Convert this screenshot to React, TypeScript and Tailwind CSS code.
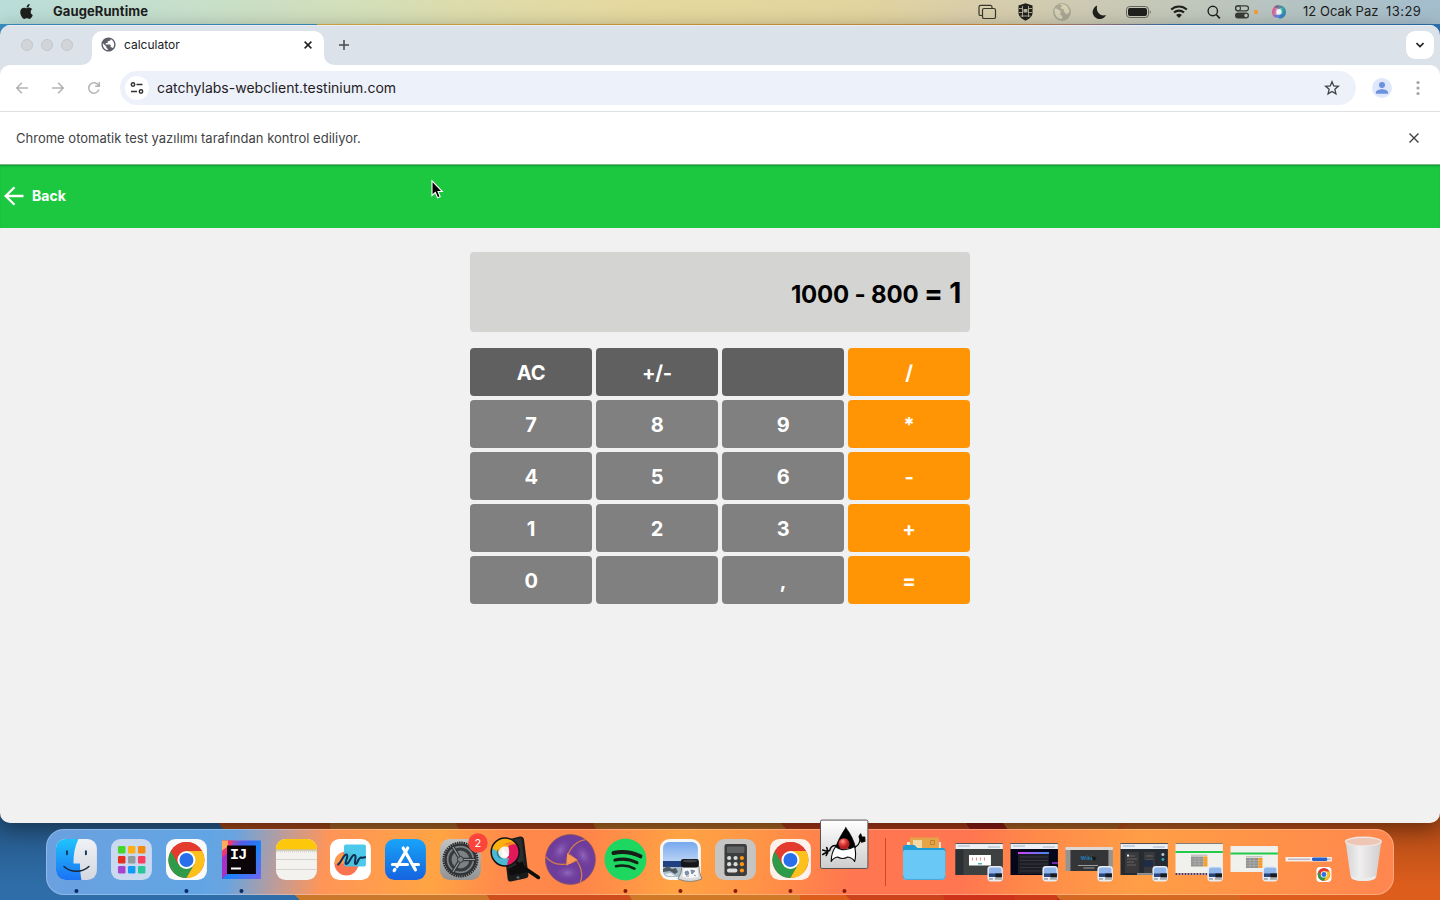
import type { ReactNode } from "react";
import { FaApple } from "react-icons/fa";
import { MdPublic } from "react-icons/md";

const keys: { label: string; tone: "dark" | "mid" | "op" }[] = [
  { label: "AC", tone: "dark" },
  { label: "+/-", tone: "dark" },
  { label: "", tone: "dark" },
  { label: "/", tone: "op" },
  { label: "7", tone: "mid" },
  { label: "8", tone: "mid" },
  { label: "9", tone: "mid" },
  { label: "*", tone: "op" },
  { label: "4", tone: "mid" },
  { label: "5", tone: "mid" },
  { label: "6", tone: "mid" },
  { label: "-", tone: "op" },
  { label: "1", tone: "mid" },
  { label: "2", tone: "mid" },
  { label: "3", tone: "mid" },
  { label: "+", tone: "op" },
  { label: "0", tone: "mid" },
  { label: "", tone: "mid" },
  { label: ",", tone: "mid" },
  { label: "=", tone: "op" },
];

const tones = {
  dark: "bg-[#606060]",
  mid: "bg-[#808080]",
  op: "bg-[#ff9505]",
};

function MenuBar() {
  return (
    <header className="flex h-6 shrink-0 items-center bg-[linear-gradient(90deg,#b9ddd8_0%,#c7dfcb_13%,#d3dfb9_25%,#dfdba9_34%,#e5d89e_45%,#e2d49e_60%,#d8cdab_68%,#c5c8b8_80%,#b4c3c3_90%,#a3bdcd_100%)] text-[13px] text-[#1d201d]">
      <FaApple className="ml-[19px] h-[17px] w-[15px] -translate-y-px" />
      <span className="ml-[19px] w-[96px] text-[13px] font-bold tracking-[0.09px] whitespace-nowrap">GaugeRuntime</span>
      <div className="flex-1" />
      <svg width="325" height="24" viewBox="970 0 325 24" fill="none">
        <g stroke="#39382e" strokeWidth="1.2">
          <path d="M982 15.500h-1.400a1.600 1.600 0 0 1-1.600-1.600V7a1.600 1.600 0 0 1 1.600-1.600h9.800a1.600 1.600 0 0 1 1.600 1.600v1" />
          <rect x="982.500" y="8.500" width="13" height="10" rx="1.600" />
        </g>
        <path d="M1025.500 3.300 1032.500 5.500v7.500c0 3.600-3.500 6-7 7.700-3.500-1.700-7-4.100-7-7.700V5.500z" fill="#20211c" />
        <path d="M1019 8.500h4M1028 8.500h4M1019 12.500h4M1028 12.500h4M1020.500 16h10M1022.500 6v11M1028.500 6v11" stroke="#b5b298" strokeWidth=".9" />
        <path d="M1023.500 9h4v3.500h-4z" fill="#b5b298" />
        <circle cx="1062" cy="12" r="9" fill="#a8a895" />
        <path d="M1054.500 9c2.500-1.500 3 1 5.500 1.500 1.500 1 .8 2.500-.4 4 1.800.5 3.600 1.800 2.400 4.500-4 .5-8-3.500-7.500-10zM1060 4.200c3-.7 6.500.5 8 3.300l1.500 4c-1 1.500-2 3-3.500 2.500-.8-2-3-2-2-4.500-1-.8-3 0-3.500-2 .8-.8 2-1 1.500-1.800z" fill="#d6d1b5" />
        <path d="M1097.200 5.500a7 7 0 1 0 8.800 9.500c-5.500 2-10.500-3.500-8.800-9.500z" fill="#20211c" />
        <rect x="1126.500" y="6.500" width="22" height="11" rx="3.200" stroke="#63645b" />
        <rect x="1128" y="8" width="19" height="8" rx="1.900" fill="#20211c" />
        <path d="M1149.800 10.200c1.300.3 1.300 3.300 0 3.600z" fill="#63645b" />
        <g stroke="#20211c" strokeWidth="2.100">
          <path d="M1171.200 9.600a11.300 11.300 0 0 1 15.600 0M1174 12.600a7.300 7.300 0 0 1 10 0" />
        </g>
        <path d="m1179 18-2.900-2.900a4.100 4.100 0 0 1 5.800 0z" fill="#20211c" />
        <circle cx="1212.800" cy="11" r="4.700" stroke="#20211c" strokeWidth="1.400" />
        <path d="m1216.200 14.500 3.600 3.800" stroke="#20211c" strokeWidth="1.700" />
        <rect x="1235.500" y="5.800" width="13" height="5" rx="2.500" stroke="#3a3c37" strokeWidth="1.200" />
        <circle cx="1238" cy="8.300" r="2.500" stroke="#3a3c37" strokeWidth="1.100" />
        <rect x="1235" y="12.500" width="14" height="6" rx="3" fill="#3a3c37" />
        <circle cx="1246" cy="15.500" r="1.700" fill="#c0c5bb" />
        <circle cx="1256" cy="12" r="2.200" fill="#f79a32" />
        <defs>
          <linearGradient id="siri" x1="0" y1="0" x2="1" y2=".2">
            <stop offset="0" stopColor="#d8437c" />
            <stop offset=".3" stopColor="#d873a8" />
            <stop offset=".55" stopColor="#c8e6ec" />
            <stop offset=".75" stopColor="#34b5a5" />
            <stop offset="1" stopColor="#3682ad" />
          </linearGradient>
        </defs>
        <circle cx="1279" cy="12" r="7" fill="url(#siri)" />
        <path d="M1274 7q4-4 9 0l-4 2z" fill="#475b78" opacity=".7" />
        <path d="M1273.500 15.500c3 4 8 3.500 10.500-.5-3-1.500-6-.5-10.500.5z" fill="#4a63dc" opacity=".7" />
        <circle cx="1279" cy="12" r="2.700" fill="#fff" opacity=".85" />
      </svg>
      <span className="ml-2 w-[76px] text-[13px] tracking-[0.02px] whitespace-nowrap">12 Ocak Paz</span>
      <span className="mr-[18px] ml-[7px] w-[36px] text-[13px] tracking-[0.45px] whitespace-nowrap">13:29</span>
    </header>
  );
}

function TabStrip() {
  return (
    <div className="flex h-10 items-end border-t border-[#eaeef2] bg-[#dce2ea]">
      <div className="flex h-full w-[92px] gap-2 pt-[13px] pl-[21px]">
        <i className="size-3 rounded-full border border-[#c3c7ca] bg-[#d1d4d8]" />
        <i className="size-3 rounded-full border border-[#c3c7ca] bg-[#d1d4d8]" />
        <i className="size-3 rounded-full border border-[#c3c7ca] bg-[#d1d4d8]" />
      </div>
      <div className="relative flex h-[34px] w-[232px] items-center rounded-t-[10px] bg-white pb-1.5">
        <span className="absolute bottom-0 -left-2.5 size-2.5 bg-white">
          <span className="block size-full rounded-br-[10px] bg-[#dce2ea]" />
        </span>
        <span className="absolute -right-2.5 bottom-0 size-2.5 bg-white">
          <span className="block size-full rounded-bl-[10px] bg-[#dce2ea]" />
        </span>
        <MdPublic className="mb-px ml-[7.500px] size-[17px] text-[#5d6167]" />
        <span className="ml-[7.500px] flex-1 text-[12px] text-[#202124]">calculator</span>
        <svg className="mr-3" width="8" height="8" viewBox="0 0 8 8" stroke="#1f2021" strokeWidth="1.500">
          <path d="m.6.6 6.800 6.800M7.400.6.6 7.400" />
        </svg>
      </div>
      <svg className="mb-[15px] ml-[15px]" width="10" height="10" viewBox="0 0 10 10" stroke="#45484c" strokeWidth="1.500">
        <path d="M5 0v10M0 5h10" />
      </svg>
      <div className="flex-1" />
      <div className="mr-1.5 mb-1.5 flex size-7 items-center justify-center rounded-[9px] bg-white">
        <svg width="8" height="6" viewBox="0 0 8 6" fill="none" stroke="#202124" strokeWidth="1.600">
          <path d="m.5 1 3.500 3.500L7.500 1" />
        </svg>
      </div>
    </div>
  );
}

function Toolbar() {
  return (
    <div className="bg-[#dce2ea]">
      <div className="flex h-[47px] items-center rounded-t-[10px] border-b border-[#dfe0e2] bg-white">
        <svg className="ml-3.5" width="88" height="18" viewBox="14 79 88 18" fill="none" stroke="#b3b4b6" strokeWidth="1.500">
          <path d="M28 88H17M22 82.700 16.700 88l5.300 5.300M52 88h11M58 82.700l5.300 5.300-5.300 5.300" />
          <path d="M98.600 85.600a5.200 5.200 0 1 0 .3 4M99.300 82v4.200h-4.200" />
        </svg>
        <div className="ml-[18px] flex h-[34px] w-[1236px] items-center rounded-full bg-[#ecf1fa]">
          <span className="ml-[5px] flex size-6 items-center justify-center rounded-full bg-white">
            <svg width="14" height="12" viewBox="0 0 14 12" fill="none" stroke="#303236" strokeWidth="1.500">
              <circle cx="3" cy="2.500" r="1.700" />
              <path d="M6.500 2.500h6M1 9.500h6" />
              <circle cx="11" cy="9.500" r="1.700" />
            </svg>
          </span>
          <span className="mb-0.5 ml-2 flex-1 text-[14px] tracking-[0.01px] text-[#1f2023]">catchylabs-webclient.testinium.com</span>
          <svg className="mr-4" width="16" height="16" viewBox="0 0 16 16" fill="none" stroke="#3f4246" strokeWidth="1.300">
            <path d="m8 1.700 1.750 4.250 4.600.35-3.500 3 1.080 4.500L8 11.400l-3.930 2.400 1.080-4.500-3.500-3 4.600-.35z" />
          </svg>
        </div>
        <svg className="ml-4" width="20" height="20" viewBox="0 0 20 20">
          <circle cx="10" cy="10" r="10" fill="#dfe8fa" />
          <circle cx="10" cy="7" r="3" fill="#6b92df" />
          <path d="M4 15.800v-1.600C4 12.200 7.500 11.200 10 11.200s6 1 6 3v1.600z" fill="#6b92df" />
        </svg>
        <svg className="ml-6" width="4" height="16" viewBox="0 0 4 16" fill="#a3a4a6">
          <circle cx="2" cy="2.500" r="1.600" />
          <circle cx="2" cy="8" r="1.600" />
          <circle cx="2" cy="13.500" r="1.600" />
        </svg>
      </div>
    </div>
  );
}

function Calculator() {
  return (
    <main className="flex flex-1 flex-col bg-[#f1f1f1]">
      <div className="flex h-16 items-center border-t border-[#78b885] bg-[#1bc83f] pb-px shadow-[inset_0_2px_2px_-1px_#14993a]">
        <svg className="ml-1" width="20" height="20" viewBox="0 0 20 20" fill="none" stroke="#fff" strokeWidth="2.300">
          <path d="M19.500 10H2M10.500 1.200 1.700 10l8.800 8.800" />
        </svg>
        <span className="mb-px ml-2 text-[14px] font-bold text-white">Back</span>
      </div>
      <div className="mx-auto mt-6 flex h-20 w-[500px] items-baseline justify-end rounded bg-[#d4d4d2] pt-[23px] pr-[9px] font-bold text-black">
        <span className="text-[24px] leading-9 tracking-[-0.2px] whitespace-pre">1000 - 800 </span>
        <span className="text-[28px] leading-9 tracking-[-0.2px]">= 1</span>
      </div>
      <div className="mx-auto mt-4 grid w-[500px] grid-cols-4 gap-1">
        {keys.map((k, i) => (
          <button key={i} className={`flex h-12 items-center justify-center rounded pt-0.5 text-[20px] font-bold tracking-[-0.3px] text-white ${tones[k.tone]}`}>
            {k.label}
          </button>
        ))}
      </div>
    </main>
  );
}

function Chrome({ x = 27.5, y = 31, r = 18 }: { x?: number; y?: number; r?: number }) {
  return (
    <g transform={`translate(${x} ${y}) scale(${r / 18})`}>
      <circle r="18" fill="#e33b2e" />
      <path d="M-15.600-9A18 18 0 0 0 0 18L7.800 4.500 0 0-7.800 4.500z" fill="#2d9b48" />
      <path d="M15.600-9A18 18 0 0 1 0 18L7.800 4.500 0-9z" fill="#fcc21b" />
      <path d="M-15.600-9A18 18 0 0 1 15.600-9H0L-7.800 4.500z" fill="#e33b2e" />
      <circle r="9" fill="#fff" />
      <circle r="7" fill="#2a6fea" />
    </g>
  );
}

function Tile({ fill }: { fill: string }) {
  return <rect x="7" y="10" width="41" height="41" rx="9.500" fill={fill} />;
}

function Finder() {
  return (
    <>
      <Tile fill="url(#finderRight)" />
      <path d="M29.500 10H16.500A9.500 9.500 0 0 0 7 19.500v22A9.500 9.500 0 0 0 16.500 51H32.500c-.9-5-1.400-10-1.500-16.500h-6.500C24.500 25 26 17 29.500 10z" fill="url(#finderLeft)" />
      <path d="M18 22.200v3M37 22.200v3" stroke="#173a5d" strokeWidth="2" strokeLinecap="round" />
      <path d="M15 37.500c7 6.500 18 6.500 25 0" stroke="#182838" strokeWidth="1.500" fill="none" strokeLinecap="round" />
    </>
  );
}

function Launchpad() {
  const colors = ["#44d62c", "#fbb016", "#f58a12", "#e5301f", "#929b9d", "#fb3d60", "#a843d0", "#139cf5", "#28c69a"];
  return (
    <>
      <Tile fill="#c9daf0" />
      {colors.map((c, i) => (
        <rect key={i} x={14 + (i % 3) * 10} y={17 + Math.floor(i / 3) * 10} width="7.500" height="7.500" rx="1.300" fill={c} />
      ))}
    </>
  );
}

function IntelliJ() {
  return (
    <>
      <path d="M8 11.500h39v38.500H8z" fill="url(#ij)" />
      <path d="M8 24l5-7v28l-5 5z" fill="#a431c9" />
      <path d="m8 11.500 12 0-7 13-5 4z" fill="#f9376b" opacity=".85" />
      <path d="m8 11.500 6 0 0 6-6 4z" fill="#fdac5c" />
      <path d="M13 16.500h29v28.500H13z" fill="#0a0308" />
      <text x="16" y="29.500" fontFamily="Liberation Mono" fontWeight="700" fontSize="15" letterSpacing="-.8" fill="#fff">IJ</text>
      <path d="M17 38.500h10V40.500h-10z" fill="#fff" />
    </>
  );
}

function Notes() {
  return (
    <>
      <Tile fill="#f3f2ee" />
      <path d="M7 20.500v-1a9.500 9.500 0 0 1 9.500-9.500h22a9.500 9.500 0 0 1 9.500 9.500v1z" fill="#fdc80b" />
      <path d="M7 21h41" stroke="#b8a97c" />
      <path d="M7 22.700h41" stroke="#bbb" strokeDasharray="1 1" strokeWidth=".8" />
      <path d="M7 30.500h41M7 40.500h41" stroke="#d4d3d0" />
    </>
  );
}

function Freeform() {
  return (
    <>
      <Tile fill="#fff" />
      <circle cx="23.500" cy="34.500" r="12" fill="#fb7350" />
      <path d="M11.500 35a12 12 0 0 1 8-11.800l4 11.300z" fill="#fd9a4d" />
      <rect x="21" y="15.500" width="22" height="22" rx="2" fill="#3ec5e8" opacity=".93" />
      <path d="M14.500 36c4-2 6-11 9-10.500s-3 10 0 9.500 5-9.500 8-9 -1 8 1 9 2.500-7 6-6.500c1.500.5 2-.2 4.500-.5" stroke="#0d3154" strokeWidth="2" fill="none" />
    </>
  );
}

function AppStore() {
  return (
    <>
      <Tile fill="url(#store)" />
      <g stroke="#fff" strokeWidth="3.200" strokeLinecap="round">
        <path d="M29.800 19 19 37.500M25.200 19l12.300 21.800M14.500 35.500h15M35.500 35.500h5M17 40.500l-.8 1.200" />
      </g>
    </>
  );
}

function Settings() {
  return (
    <>
      <Tile fill="url(#silver)" />
      <circle cx="27.500" cy="30.500" r="17" fill="none" stroke="#252729" strokeWidth="2" strokeDasharray="1.500 .8" />
      <circle cx="27.500" cy="30.500" r="15" fill="#7d8285" stroke="#303335" strokeWidth="2.500" />
      <circle cx="27.500" cy="30.500" r="10.500" fill="none" stroke="#373b3e" strokeWidth="3" />
      <path d="M27.500 30.500H42M27.500 30.500 20 18M27.500 30.500 20 43" stroke="#34383a" strokeWidth="3.500" />
      <path d="M27.500 30.500H42M27.500 30.500 20 18M27.500 30.500 20 43" stroke="#979b9e" strokeWidth="1.200" />
      <circle cx="27.500" cy="30.500" r="3" fill="#7d8285" stroke="#34383a" />
      <circle cx="45" cy="14" r="9.800" fill="#fb453b" />
      <text x="45" y="18" textAnchor="middle" fontSize="11" fill="#fff">2</text>
    </>
  );
}

function Magnifier() {
  return (
    <>
      <path d="m18 11 14-3.500q3.500-.5 4 2.500l4.500 36q.3 2.800-2.500 3.300l-15 3.200q-2.800.5-3.300-2.300L15.500 14q-.3-2.300 2.500-3z" fill="#1a1b1c" />
      <path d="m19 12 14.500-3 4 34.500-16.500 3.500z" fill="#2c2d2e" />
      <path d="m20 40 15-8 3 11.500-16.500 3.500z" fill="#0e0e0f" />
      <circle cx="30" cy="48.500" r="1.500" fill="#5a5e60" />
      <g transform="translate(17.200 23)">
        <circle r="14" fill="#f4efe9" />
        <path d="M-13.500-3A14 14 0 0 1 12-7Q8-8 3-5Q-6-8-8 4Q-10-3-13.500-3z" fill="#fbb010" />
        <path d="M-2-7Q5-13 12-7Q10-6 9-3Q4-8-2-7z" fill="#f3812a" />
        <path d="M3-6Q9-9 12-7A14 14 0 0 1 2 13.800Q-3 11-4 8Q7 7 3-6z" fill="#e3185b" />
        <path d="M-13.500-3Q-9-4-8 3Q-4 8 4 6Q2 10 2 13.800A14 14 0 0 1-13.500-3z" fill="#4bb9d3" />
        <path d="M-7-3Q-8 4-2 7L-6 6Q-11 1-7-3z" fill="#23829f" />
        <path d="m-3-4 7 8-7 1z" fill="#fff" />
        <circle r="14" fill="none" stroke="#131212" strokeWidth="1.500" />
      </g>
      <path d="m28 33 6 4" stroke="#0d0d0d" strokeWidth="2.500" />
      <path d="m35 38 15.500 10.500" stroke="#0d0d0d" strokeWidth="3.600" strokeLinecap="round" />
    </>
  );
}

function Aperture() {
  return (
    <g transform="translate(27.500 30.500)">
      <circle r="25" fill="#6e3c9b" stroke="#8b5560" strokeWidth=".8" />
      {[0, 120, 240].map((a) => (
        <ellipse key={a} transform={`rotate(${a}) translate(13 -4) rotate(62)`} rx="14" ry="9" fill="url(#purple)" />
      ))}
      {[0, 120, 240].map((a) => (
        <path key={a} transform={`rotate(${a})`} d="M-3.500 6C-5-5 2-18 15-20" fill="none" stroke="#d48146" strokeWidth="1.200" />
      ))}
      <path d="M-3.300-5.800 6.700.1-3.400 5.700z" fill="#fb9853" />
    </g>
  );
}

function Spotify() {
  return (
    <>
      <circle cx="27.500" cy="30.500" r="21" fill="#1ed760" />
      <g fill="none" stroke="#151f18" strokeLinecap="round">
        <path d="M15.500 24c9-2 18-1 27 3.300" strokeWidth="4" />
        <path d="M17 31c8-2 15-1 22 2.700" strokeWidth="3.200" />
        <path d="M18 37.300c7-1.600 13-.7 18.500 2.400" strokeWidth="2.600" />
      </g>
    </>
  );
}

function Preview() {
  return (
    <>
      <Tile fill="#f7f7f5" />
      <rect x="10" y="13" width="35" height="35" rx="6" fill="url(#sky)" />
      <path d="M10 32h35v6H10z" fill="#20407f" />
      <path d="M10 38h35v4a6 6 0 0 1-6 6H16a6 6 0 0 1-6-6z" fill="#a9bcc8" />
      <path d="m10 40 5-3 4 3 4-1 2 4-3 2-5-3-7 1z" fill="#4f5960" />
      <path d="m12 45 6-1 4 3h-7z" fill="#e9eff1" />
      <path d="M29 37q0 7-4 13 12 5 24 0-3-6-3-13z" fill="#d9dbdc" stroke="#707477" strokeWidth=".8" />
      <path d="M30.500 39h14l1 9q-8 2-16 0z" fill="#f4f6f7" />
      <path d="m32 43 3-1 1 3-3 1zM38 41l4 1-3 3zM33 47h3M41 46l2 1" fill="#7f93ab" stroke="#6e7c90" strokeWidth=".8" />
      <rect x="28" y="30" width="18" height="8.500" rx="2.500" fill="#151617" />
      <ellipse cx="37" cy="32" rx="7.500" ry="1.400" fill="#3c3e40" />
    </>
  );
}

function CalcIcon() {
  return (
    <>
      <Tile fill="#c6c5c3" />
      <rect x="16.500" y="15" width="22.500" height="32" rx="2.500" fill="#3b3c3e" />
      <rect x="19" y="17.500" width="17.500" height="6.500" rx="1" fill="#616264" />
      {[0, 1, 2, 3, 4, 5].map((i) => (
        <circle key={i} cx={21.2 + (i % 3) * 6.4} cy={29 + Math.floor(i / 3) * 6.2} r="2.100" fill={i % 3 === 2 ? "#ff9514" : "#d9dadb"} />
      ))}
      <rect x="19" y="39.500" width="10.500" height="4" rx="2" fill="#dddddd" />
      <circle cx="34" cy="41.500" r="2.100" fill="#ff9514" />
    </>
  );
}

function Duke() {
  return (
    <>
      <rect x="3.500" y="-9" width="47.500" height="48.500" rx="1.500" fill="url(#paper)" stroke="#575150" />
      <g transform="translate(.7 0)" stroke="#080808" strokeLinejoin="round" strokeLinecap="round">
        <path d="M18 16.500q-5 0-6 5l-3 1" fill="none" strokeWidth="1.500" />
        <path d="M10 22.500 5 21M9.500 23l-4.500 2.500M10 23.500l-1.500 3M10 21.500 9 18.500" fill="none" strokeWidth="1.600" />
        <path d="M37 18q4-1 5.500-7" fill="none" strokeWidth="1.300" />
        <path d="m42.500 11-1-3.500 1.500-2.500 1 3 3 0 .3 4-3.300 1z" strokeWidth="1.300" />
        <path d="M28.200-1.500Q36 9 38 19H17.500Q21 9 28.200-1.500z" strokeWidth=".6" />
        <path d="M18 17.500Q13.500 24 13.500 32.500 16 28.500 20 28 25 31 30 28 34.500 28.500 37 32.500 39 25 37 17.500 26 24 18 17.500z" fill="#fff" strokeWidth="1.100" />
      </g>
      <circle cx="27" cy="14.700" r="5.600" fill="url(#red)" />
    </>
  );
}

function Folder() {
  return (
    <>
      <path d="M10 13h34v10H10z" fill="#f3e4d3" />
      <path d="M13 8.500h29V23H13z" fill="#e3a44a" />
      <path d="M16 11h9v8h-9z" fill="#f2d9a8" />
      <path d="M33.500 11.500h4v4h-4z" fill="none" stroke="#c38125" />
      <path d="M6 18.500q0-2.500 2.500-2.500h9l3 3h25.500q2.500 0 2.500 3v20H6z" fill="#1d9bd3" />
      <path d="M6 23q0-2 2-2h38.500q2 0 2 2v24.500q0 3.500-3.500 3.500H9.500Q6 51 6 47.500z" fill="#69c8f5" />
      <path d="M6 46.500q0 4 3.500 4H45q3.500 0 3.500-4" stroke="#4ca8d8" fill="none" />
    </>
  );
}

function MiniPreview() {
  return (
    <g>
      <rect x="35.500" y="37" width="15.500" height="15.500" rx="3.500" fill="#e8edf4" />
      <path d="M37 41q0-2.500 2.500-2.500h8q2 0 2 2V45H37z" fill="#90b6ec" />
      <path d="M37 44.500h13V48H37z" fill="#28467c" />
      <path d="M43.500 44.500h6.500v4h-6.500z" fill="#191b1f" />
      <path d="M37 50h4M43 50h7" stroke="#777" />
    </g>
  );
}

function Thumb({ kind }: { kind: "modal" | "list" | "wiki" | "code" | "calc" | "calcPlain" }) {
  if (kind === "wiki")
    return (
      <>
        <path d="M3.500 18h47.500v24H3.500z" fill="#969493" />
        <path d="M3.500 18h47.500v3H3.500z" fill="#ded8d4" />
        <path d="M8.500 21h38v21h-38z" fill="#343536" />
        <text x="18.500" y="31" fontSize="5.500" fontWeight="700" fill="#217bb5">Wiki</text>
        <path d="m30 27 5 2-3 3z" fill="#14181c" />
        <path d="M16 36.500h20M21.500 39h11" stroke="#b9b9b9" strokeWidth=".8" />
        <MiniPreview />
      </>
    );
  if (kind === "calc" || kind === "calcPlain") {
    const full = kind === "calc";
    return (
      <>
        <rect x="3.500" y={full ? 14 : 17} width="47.500" height={full ? 32 : 26} fill="#f0f0ed" />
        {full && <path d="M3.500 14.500h47.500" stroke="#7d7975" />}
        <path d={full ? "M3.500 23h47.500" : "M3.500 24.500h47.500"} stroke="#21ca4a" strokeWidth="2" />
        <g transform={full ? "" : "translate(0 1.500)"}>
          <path d="M19 25.500h16.500v1.500H19z" fill="#c4c4c2" />
          <path d="M19 27.500h12.500v10H19z" fill="#929292" />
          <path d="M31.500 27.500h4v10h-4z" fill="#ff9b19" />
          <path d="M19 30h16M19 32.500h16M19 35h16M23 27.500v10M27 27.500v10" stroke="#bdbdbb" strokeWidth=".5" />
        </g>
        {full && <path d="M3.500 45h47.500" stroke="#5b3554" strokeWidth="2" strokeDasharray="2 1" />}
        <MiniPreview />
      </>
    );
  }
  const dark = kind === "list" ? "#05061a" : kind === "modal" ? "#3d4140" : "#252b32";
  return (
    <>
      <path d="M3.500 14.500h47.500V46H3.500z" fill={dark} />
      <path d="M3.500 14.500h47.500V20H3.500z" fill="#eef1f6" />
      <path d="M3.500 14.500h47.500" stroke="#4d5054" />
      <path d="M6 17h12M36 18h12" stroke="#91a4bd" strokeWidth=".8" />
      {kind === "modal" && (
        <>
          <path d="M3.500 20.500h8V46h-8z" fill="#2a3033" />
          <path d="M17 26h22v10.500H17z" fill="#fff" />
          <path d="M20 30h16" stroke="#d48d8a" strokeWidth="3" strokeDasharray="1 3" />
          <path d="M26 34.800h4" stroke="#1ca7a0" strokeWidth="1.200" />
        </>
      )}
      {kind === "list" && (
        <>
          <path d="M11 23h31v22H11z" fill="#1d1d26" />
          <path d="M11 23h31v2H11z" fill="url(#violet)" />
          <path d="M13 28h28M13 31.500h28M13 35h28M13 38.500h28M13 42h28" stroke="#46464e" strokeWidth=".6" />
          <path d="M45 34h6" stroke="#9536df" strokeWidth="1.500" />
        </>
      )}
      {kind === "code" && (
        <>
          <path d="M8 23h14v21H8zM27 23h11v21H27z" fill="#39383a" />
          <path d="M10 27h8M10 30h10M10 33h7M10 36h9M29 27h7M29 31h7" stroke="#777" strokeWidth=".7" />
          <path d="M27 31h9v7h-9z" fill="#202b46" />
          <path d="M10 25.500h2v2h-2z" fill="#eee" />
          <circle cx="46" cy="25.500" r="1.500" fill="#b8c5cc" />
          <circle cx="46" cy="30.500" r="1.500" fill="#38a1c0" />
          <path d="M20 45h15" stroke="#f4f4f4" />
        </>
      )}
      <MiniPreview />
    </>
  );
}

function Download() {
  return (
    <>
      <path d="M3.500 28h46.500v4.500H3.500z" fill="#f7ece8" />
      <path d="M6 30.200h22M46 30.200h3" stroke="#9098ab" strokeWidth=".9" />
      <rect x="30" y="28.500" width="15.500" height="3.500" rx="1.500" fill="#2560c8" />
      <rect x="34.500" y="38" width="15" height="15" rx="3.500" fill="#fff" />
      <Chrome x={42} y={45.5} r={6.3} />
    </>
  );
}

function Trash() {
  return (
    <>
      <path d="m9.500 12 5 35q1 5 13 5t13-5l5-35z" fill="url(#trash)" />
      <ellipse cx="27.500" cy="12.500" rx="18" ry="4.300" fill="#eec6b6" stroke="#efe5e1" strokeWidth="1.300" />
      <path d="m15 47q12 5 25 0l-1 3q-11 4-23 0z" fill="#ededed" />
    </>
  );
}

const apps: { icon: ReactNode; running?: string }[] = [
  { icon: <Finder />, running: "#082a62" },
  { icon: <Launchpad /> },
  { icon: (<><Tile fill="#fafafa" /><Chrome /></>), running: "#082a62" },
  { icon: <IntelliJ />, running: "#082a62" },
  { icon: <Notes /> },
  { icon: <Freeform /> },
  { icon: <AppStore /> },
  { icon: <Settings /> },
  { icon: <Magnifier /> },
  { icon: <Aperture /> },
  { icon: <Spotify />, running: "#861b0a" },
  { icon: <Preview />, running: "#861b0a" },
  { icon: <CalcIcon />, running: "#861b0a" },
  { icon: (<><Tile fill="#fdf1eb" /><Chrome /></>), running: "#861b0a" },
  { icon: <Duke />, running: "#861b0a" },
];

const shelf: ReactNode[] = [
  <Folder />,
  <Thumb kind="modal" />,
  <Thumb kind="list" />,
  <Thumb kind="wiki" />,
  <Thumb kind="code" />,
  <Thumb kind="calc" />,
  <Thumb kind="calcPlain" />,
  <Download />,
  <Trash />,
];

function Slot({ children, running }: { children: ReactNode; running?: string }) {
  return (
    <svg className="h-[66px] w-[54.900px] shrink-0 overflow-visible" viewBox="0 0 55 66">
      {children}
      {running && <circle cx="27.500" cy="62" r="2" fill={running} />}
    </svg>
  );
}

function Gradients() {
  return (
    <svg className="absolute size-0">
      <defs>
        <linearGradient id="finderLeft" x1="0" y1="0" x2="0" y2="1"><stop stopColor="#20c3fb" /><stop offset="1" stopColor="#1b73f5" /></linearGradient>
        <linearGradient id="finderRight" x1="0" y1="0" x2="0" y2="1"><stop stopColor="#f0f1f5" /><stop offset="1" stopColor="#d3d7df" /></linearGradient>
        <linearGradient id="ij" x1="0" y1="0" x2="1" y2="1"><stop stopColor="#fb4176" /><stop offset=".3" stopColor="#4d5df0" /><stop offset=".55" stopColor="#1784f8" /><stop offset="1" stopColor="#7662f0" /></linearGradient>
        <linearGradient id="store" x1="0" y1="0" x2="0" y2="1"><stop stopColor="#18a4f9" /><stop offset="1" stopColor="#1663df" /></linearGradient>
        <linearGradient id="silver" x1="0" y1="0" x2="0" y2="1"><stop stopColor="#c2c3c3" /><stop offset="1" stopColor="#929392" /></linearGradient>
        <linearGradient id="sky" x1="0" y1="0" x2="0" y2="1"><stop stopColor="#78a8ee" /><stop offset=".55" stopColor="#b8d2f5" /></linearGradient>
        <radialGradient id="purple"><stop stopColor="#9068ba" /><stop offset="1" stopColor="#6e3c9b" stopOpacity="0" /></radialGradient>
        <linearGradient id="paper" x1="0" y1="0" x2="0" y2="1"><stop stopColor="#fff" /><stop offset="1" stopColor="#cdcdcd" /></linearGradient>
        <radialGradient id="red" cx=".4" cy=".3"><stop stopColor="#ff9c92" /><stop offset=".5" stopColor="#e44a42" /><stop offset="1" stopColor="#b91e20" /></radialGradient>
        <linearGradient id="violet"><stop stopColor="#d33ff2" /><stop offset="1" stopColor="#4089f8" /></linearGradient>
        <linearGradient id="trash"><stop stopColor="#d5d4d4" /><stop offset=".4" stopColor="#f0efef" /><stop offset="1" stopColor="#d0cecd" /></linearGradient>
      </defs>
    </svg>
  );
}

function Wallpaper() {
  return (
    <svg className="absolute inset-x-0 bottom-0 h-[100px] w-full" viewBox="0 800 1440 100" preserveAspectRatio="none">
      <defs>
        <linearGradient id="shade" x1="0" y1="823" x2="0" y2="900" gradientUnits="userSpaceOnUse">
          <stop stopColor="#000" stopOpacity=".2" />
          <stop offset=".8" stopColor="#000" stopOpacity="0" />
        </linearGradient>
      </defs>
      <path d="M0 800h1440v100H0z" fill="#dc5d1c" />
      <path d="M0 800h197l103 100H0z" fill="#2e6da8" />
      <path d="M197 800h246l47 100H300z" fill="#cc782a" />
      <path d="M217 821h238l5 9H224z" fill="#c2531f" />
      <path d="M330 821h125l5 9H330z" fill="#c8752b" />
      <path d="M443 830h139l50 70H490z" fill="#cd4d1c" />
      <path d="M455 821h137l5 9H459z" fill="#cd4d1c" />
      <path d="M592 821h208v79H632z" fill="#d07a27" />
      <path d="M760 800h190l65 100H850z" fill="#cc421a" />
      <path d="M951 800h35l77 100h-48z" fill="#a62018" />
      <path d="M940 890h78l5 10h-78z" fill="#cc3318" />
      <path d="M1015 893h50l-8 7h-42z" fill="#cc3c19" />
      <path d="M986 800h154l-80 100z" fill="#cc7226" />
      <path d="M1060 900l80-90h100v90z" fill="#d66922" />
      <path d="M0 800h1440v100H0z" fill="url(#shade)" />
    </svg>
  );
}

export default function App() {
  return (
    <div className="relative flex h-[900px] w-[1440px] flex-col overflow-hidden bg-[linear-gradient(90deg,#3c94ca_0_317px,#e0b545_317px,#d58f38_1000px,#9b7885_1100px,#2d73b4_1180px)] font-['Inter','Liberation_Sans',sans-serif]">
      <Gradients />
      <Wallpaper />
      <MenuBar />
      <section className="relative mt-px flex h-[798px] shrink-0 flex-col overflow-hidden rounded-[10px] shadow-[0_6px_22px_rgba(0,0,0,0.4)]">
        <TabStrip />
        <Toolbar />
        <div className="flex h-[52px] items-center justify-between bg-white px-4">
          <span className="mt-0.5 text-[13px] tracking-[0.01px] text-[#414345]">Chrome otomatik test yazılımı tarafından kontrol ediliyor.</span>
          <svg className="mr-[5px]" width="10" height="10" viewBox="0 0 10 10" stroke="#3d3f42" strokeWidth="1.400">
            <path d="m.5.5 9 9M9.500.5l-9 9" />
          </svg>
        </div>
        <Calculator />
      </section>
      <nav className="relative mx-[46px] mt-1.5 flex h-[66px] shrink-0 rounded-[18px] bg-[linear-gradient(100deg,#6ba0df_0%,#62a5e4_12%,#69a4df_14%,#c69b91_18%,#ff9557_21%,#ffa443_29%,#ff8a4b_34%,#ff8549_40%,#ffa344_47%,#ff9346_53%,#ff7650_60%,#ff7650_68%,#ff8a49_73%,#ff9e46_81%,#ff9248_90%,#ff8650_100%)] pl-[3px] shadow-[inset_0_0_0_1px_rgba(255,255,255,0.25)]">
        {apps.map((a, i) => (
          <Slot key={i} running={a.running}>{a.icon}</Slot>
        ))}
        <div className="mr-[11.500px] ml-[12.500px] mt-[9px] h-12 w-px shrink-0 bg-[#cc4b24]" />
        {shelf.map((icon, i) => (
          <Slot key={i}>{icon}</Slot>
        ))}
      </nav>
      <svg className="absolute top-[179px] left-[430px]" width="14" height="21" viewBox="0 0 14 21">
        <path d="M2 1.800v14.700l3.300-3 2.300 5.300 2.600-1.100-2.200-5.200h4.300z" fill="#000" stroke="#fff" strokeWidth="1.100" />
      </svg>
    </div>
  );
}
